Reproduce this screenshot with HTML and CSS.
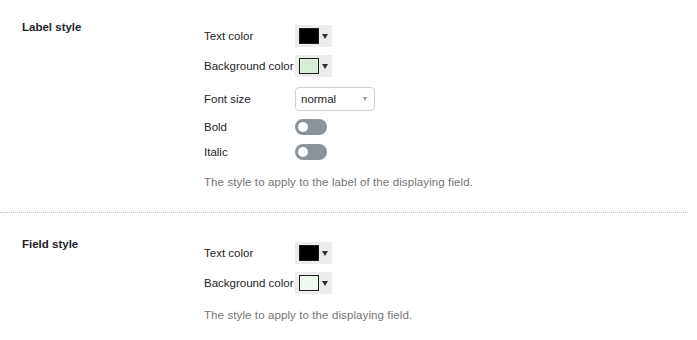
FILE: index.html
```html
<!DOCTYPE html>
<html>
<head>
<meta charset="utf-8">
<link rel="stylesheet" href="styles.css">
</head>
<body>
<div class="page">
  <section class="section first">
    <h3 class="heading">Label style</h3>
    <div class="fields">
      <div class="row row-color">
        <span class="label">Text color</span>
        <span class="picker"><span class="swatch swatch-black"></span><span class="caret"></span></span>
      </div>
      <div class="row row-color row-gap-lg">
        <span class="label">Background color</span>
        <span class="picker"><span class="swatch swatch-green"></span><span class="caret"></span></span>
      </div>
      <div class="row row-select">
        <span class="label">Font size</span>
        <span class="select"><span>normal</span><span class="select-caret"></span></span>
      </div>
      <div class="row row-toggle">
        <span class="label">Bold</span>
        <span class="toggle"><span class="knob"></span></span>
      </div>
      <div class="row row-toggle">
        <span class="label">Italic</span>
        <span class="toggle"><span class="knob"></span></span>
      </div>
      <p class="description">The style to apply to the label of the displaying field.</p>
    </div>
  </section>
  <section class="section second">
    <h3 class="heading">Field style</h3>
    <div class="fields">
      <div class="row row-color">
        <span class="label">Text color</span>
        <span class="picker"><span class="swatch swatch-black"></span><span class="caret"></span></span>
      </div>
      <div class="row row-color">
        <span class="label">Background color</span>
        <span class="picker"><span class="swatch swatch-pale"></span><span class="caret"></span></span>
      </div>
      <p class="description">The style to apply to the displaying field.</p>
    </div>
  </section>
</div>
</body>
</html>
```
FILE: styles.css
```css
* { box-sizing: border-box; }
html, body { margin: 0; padding: 0; background: #fff; }
body {
  font-family: "Liberation Sans", Arial, sans-serif;
  font-size: 11.5px;
  color: #1e1e1e;
}
.page { padding-right: 9px; }
.section {
  display: grid;
  grid-template-columns: 182px 1fr;
  padding-left: 22px;
}
.section.first {
  padding-top: 19px;
  padding-bottom: 22px;
  border-bottom: 1px dotted #c3c4c7;
}
.section.second { padding-top: 23px; }
.heading {
  margin: 0;
  font-size: 11.5px;
  line-height: 16px;
  font-weight: bold;
  color: #1d2327;
}
.fields {
  display: flex;
  flex-direction: column;
  padding-top: 6px;
}
.row {
  display: flex;
  align-items: center;
}
.row-color { height: 22px; margin-bottom: 8px; }
.row-gap-lg { margin-bottom: 10px; }
.row-select { height: 24px; margin-bottom: 8px; }
.row-toggle { height: 16px; margin-bottom: 9px; }
.row-toggle:last-of-type { margin-bottom: 0; }
.label { width: 91px; white-space: nowrap; line-height: 16px; }
.picker {
  display: flex;
  align-items: center;
  width: 37px;
  height: 22px;
  background: #ececec;
  padding-left: 4px;
}
.swatch {
  width: 20px;
  height: 16px;
  border: 1px solid #1e1e1e;
}
.swatch-black { background: #000; }
.swatch-green { background: #d7edd5; }
.swatch-pale { background: #eef8ee; }
.caret {
  margin-left: 3px;
  width: 0;
  height: 0;
  border-left: 3px solid transparent;
  border-right: 3px solid transparent;
  border-top: 5px solid #333;
}
.select {
  display: flex;
  align-items: center;
  justify-content: space-between;
  width: 80px;
  height: 24px;
  border: 1px solid #d0d0d0;
  border-radius: 4px;
  padding: 0 7px 0 5px;
  background: #fff;
  color: #1e1e1e;
}
.select-caret {
  width: 0;
  height: 0;
  border-left: 2.5px solid transparent;
  border-right: 2.5px solid transparent;
  border-top: 4px solid #9a9a9a;
}
.toggle {
  display: flex;
  align-items: center;
  width: 32px;
  height: 16px;
  border-radius: 8px;
  background: #8b939c;
  padding-left: 3px;
}
.knob {
  width: 10px;
  height: 10px;
  border-radius: 50%;
  background: #fff;
}
.description {
  margin: 14px 0 0;
  line-height: 16px;
  color: #757575;
  letter-spacing: 0.1px;
}
.second .description { margin-top: 5px; }
```
